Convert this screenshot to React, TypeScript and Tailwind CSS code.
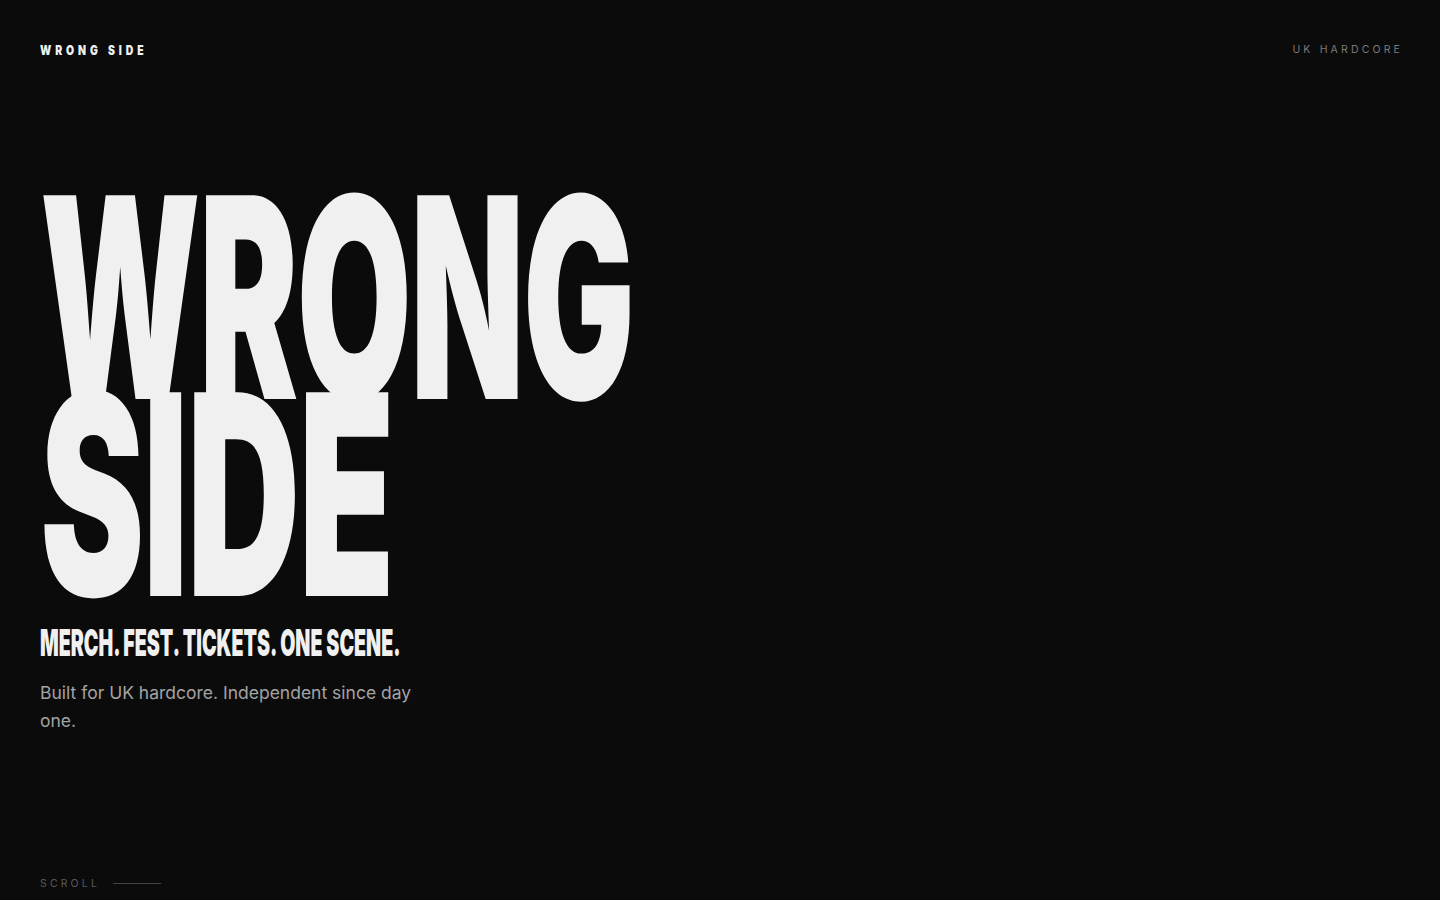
const display = "font-['Inter','Liberation_Sans',sans-serif] font-black text-[#f0f0f0]";

export default function App() {
  return (
    <div className="h-screen w-full bg-[#0b0b0b] flex flex-col px-10 font-['Inter','Liberation_Sans',sans-serif] overflow-hidden">
      {/* top bar */}
      <header className="flex items-center justify-between pt-[42px] h-[58px]">
        <div className={`${display} text-[13px] leading-none tracking-[0.38em] scale-x-[0.8] origin-left`}>
          WRONG SIDE
        </div>
        <div className="text-[10.5px] leading-none tracking-[0.3em] text-[#7a7a7a] mr-[-3px]">
          UK HARDCORE
        </div>
      </header>

      {/* hero */}
      <main className="flex flex-col pt-[141px]">
        <h1 className={`${display} text-[280px] leading-[197px] tracking-[-0.01em] whitespace-nowrap`}>
          <div className="scale-x-[0.53] origin-left">WRONG</div>
          <div className="scale-x-[0.56] origin-left">SIDE</div>
        </h1>
        <h2 className={`${display} mt-[30px] text-[37px] leading-[40px] scale-x-[0.53] origin-left whitespace-nowrap`}>
          MERCH. FEST. TICKETS. ONE SCENE.
        </h2>
        <p className="mt-[16px] max-w-[400px] text-[17.5px] leading-[28px] text-[#a3a3a3]">
          Built for UK hardcore. Independent since day one.
        </p>
      </main>

      {/* scroll hint */}
      <footer className="mt-auto pb-[11px] flex items-center gap-[13px]">
        <span className="text-[10.5px] leading-none tracking-[0.3em] text-[#5a5a5a]">SCROLL</span>
        <span className="h-px w-12 bg-[#444]" />
      </footer>
    </div>
  );
}
